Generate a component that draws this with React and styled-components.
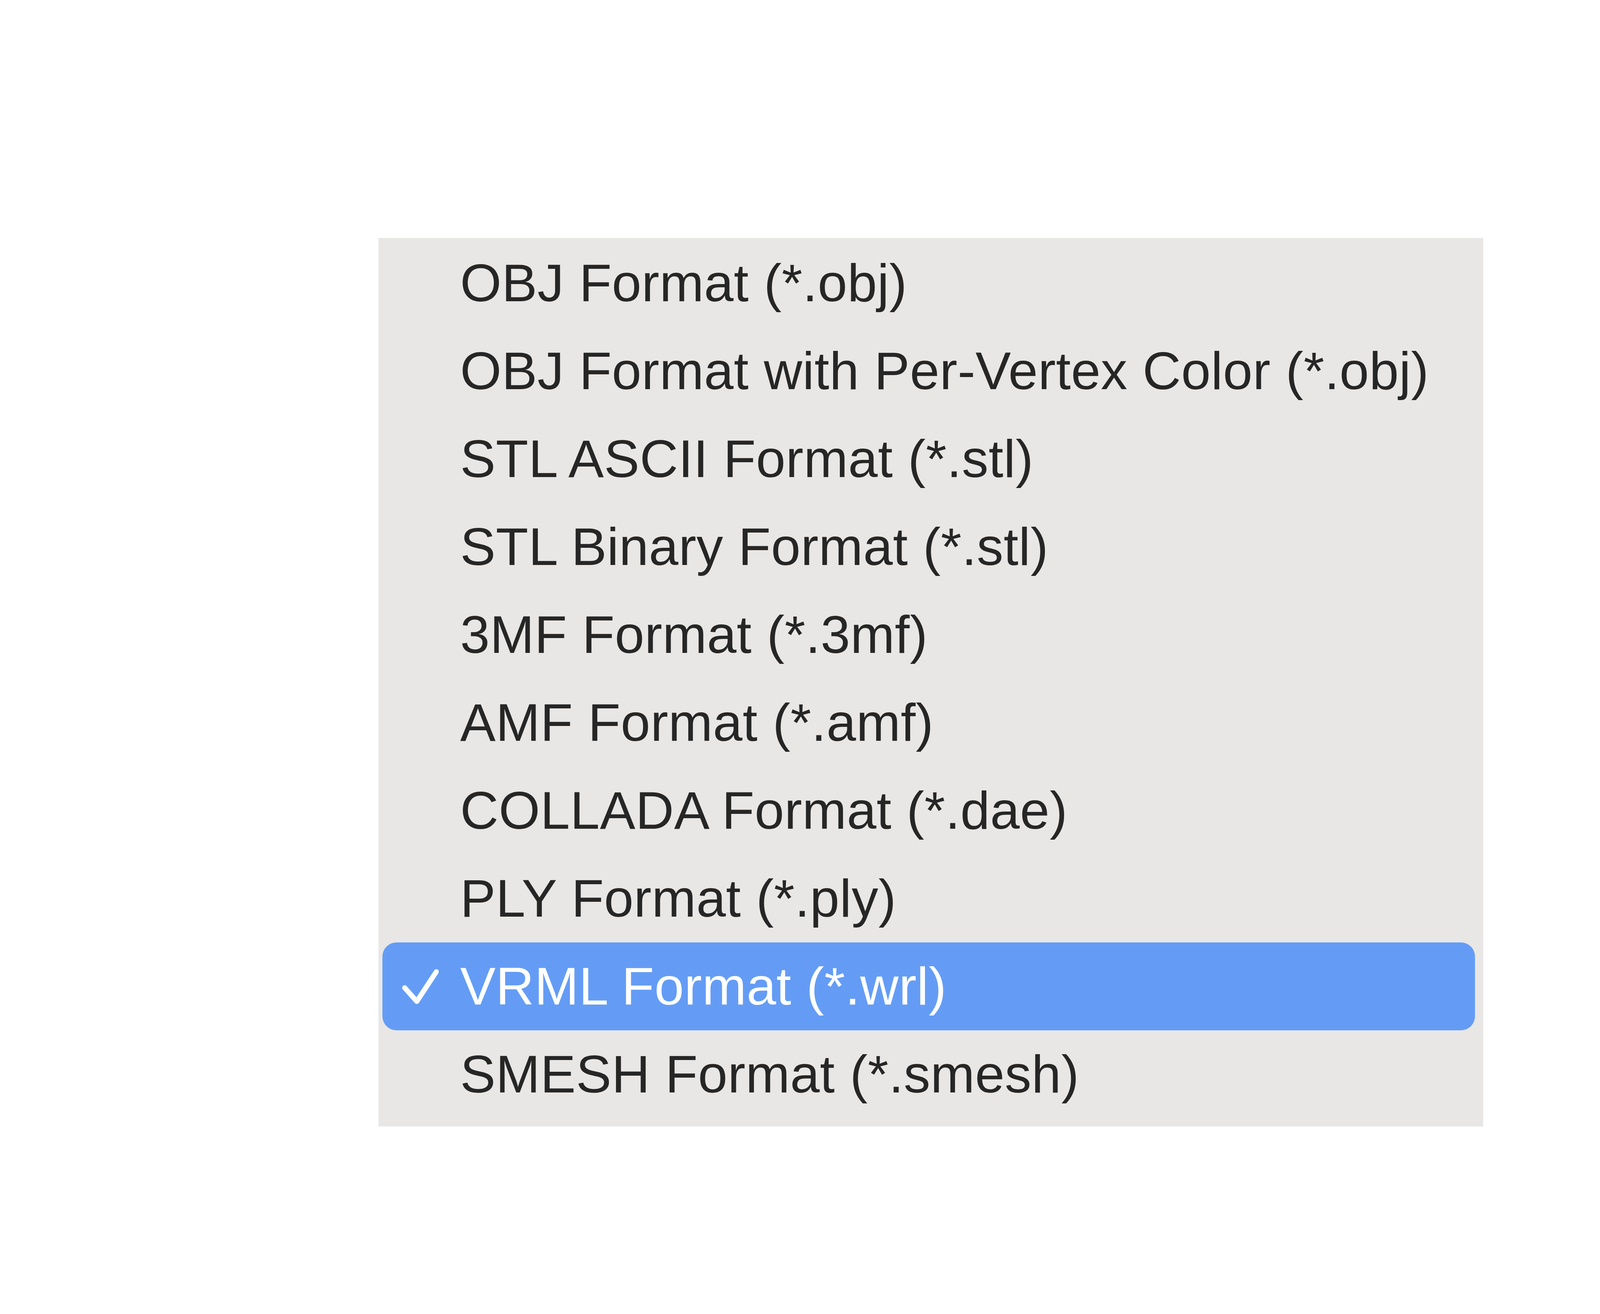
import React from 'react';
import styled, { createGlobalStyle } from 'styled-components';

const GlobalStyle = createGlobalStyle`
  html, body {
    margin: 0;
    padding: 0;
    background: #ffffff;
    overflow: hidden;
  }
`;

const Page = styled.div`
  min-height: 100vh;
  box-sizing: border-box;
  padding: 609px 0 0 969px;
  background: #ffffff;
`;

const Menu = styled.ul`
  list-style: none;
  margin: 0;
  width: 2828px;
  box-sizing: border-box;
  padding: 3px 21px 21px 10px;
  background: #e8e7e6;
  display: flex;
  flex-direction: column;
`;

const Item = styled.li`
  height: 225px;
  display: flex;
  align-items: center;
  border-radius: 36px;
  background: ${({ $selected }) => ($selected ? '#649cf5' : 'transparent')};
  color: ${({ $selected }) => ($selected ? '#ffffff' : '#262626')};
  font-family: 'Liberation Sans', Arial, sans-serif;
  font-size: 136px;
  line-height: 225px;
  letter-spacing: 0.6px;
  white-space: nowrap;
`;

const CheckSlot = styled.span`
  flex: 0 0 199px;
  box-sizing: border-box;
  padding-left: 51px;
  display: flex;
  align-items: center;
`;

const Check = () => (
  <svg width="93" height="92" viewBox="0 0 93 92" fill="none">
    <polyline
      points="6,49 37,84 87,8"
      stroke="#ffffff"
      strokeWidth="13"
      strokeLinecap="round"
      strokeLinejoin="round"
    />
  </svg>
);

const formats = [
  'OBJ Format (*.obj)',
  'OBJ Format with Per-Vertex Color (*.obj)',
  'STL ASCII Format (*.stl)',
  'STL Binary Format (*.stl)',
  '3MF Format (*.3mf)',
  'AMF Format (*.amf)',
  'COLLADA Format (*.dae)',
  'PLY Format (*.ply)',
  'VRML Format (*.wrl)',
  'SMESH Format (*.smesh)',
];

const SELECTED = 'VRML Format (*.wrl)';

const App = () => (
  <>
    <GlobalStyle />
    <Page>
      <Menu>
        {formats.map((label) => {
          const selected = label === SELECTED;
          return (
            <Item key={label} $selected={selected}>
              <CheckSlot>{selected && <Check />}</CheckSlot>
              {label}
            </Item>
          );
        })}
      </Menu>
    </Page>
  </>
);

export default App;
